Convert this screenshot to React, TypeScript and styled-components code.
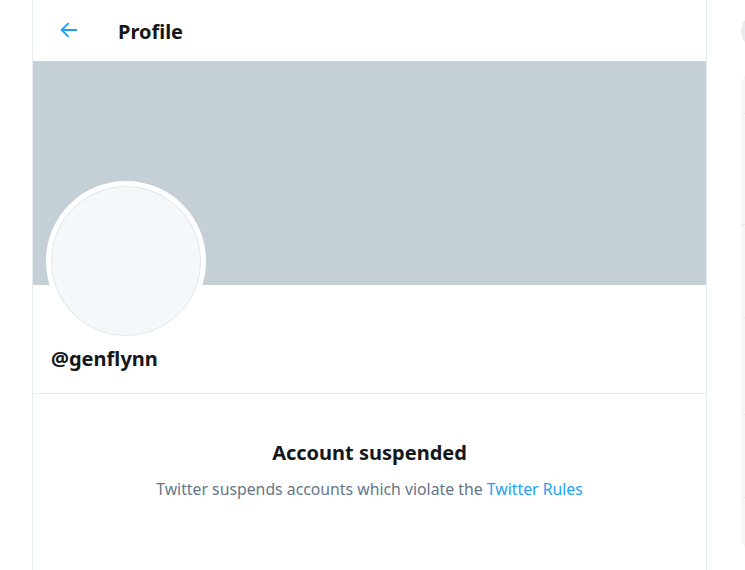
import React from 'react';
import styled, { createGlobalStyle } from 'styled-components';

const GlobalStyle = createGlobalStyle`
  html, body {
    margin: 0;
    padding: 0;
    background: #ffffff;
    font-family: 'Noto Sans', 'Open Sans', 'Liberation Sans', sans-serif;
    color: #14171a;
    overflow: hidden;
  }
`;

const Page = styled.div`
  display: flex;
  align-items: flex-start;
  padding-left: 32px;
  width: 745px;
  height: 570px;
  box-sizing: border-box;
  overflow: hidden;
`;

const MainColumn = styled.main`
  width: 673px;
  height: 570px;
  flex-shrink: 0;
  border-left: 1px solid #e6ecf0;
  border-right: 1px solid #e6ecf0;
  display: flex;
  flex-direction: column;
`;

const Header = styled.header`
  height: 61px;
  display: flex;
  align-items: center;
  padding-left: 24px;
  gap: 37px;
`;

const BackButton = styled.button`
  width: 24px;
  height: 24px;
  padding: 0;
  border: none;
  background: none;
  display: flex;
  align-items: center;
  justify-content: center;
  margin-top: -2px;
`;

const Title = styled.h1`
  margin: 2px 0 0;
  font-size: 20px;
  font-weight: 700;
  line-height: 24px;
`;

const Banner = styled.div`
  height: 224px;
  background: #c4cfd6;
  flex-shrink: 0;
`;

const ProfileInfo = styled.section`
  padding: 0 13px;
  height: 108px;
  border-bottom: 1px solid #e6ecf0;
  display: flex;
  flex-direction: column;
`;

const Avatar = styled.div`
  width: 150px;
  height: 150px;
  margin-top: -104px;
  border-radius: 50%;
  border: 5px solid #ffffff;
  background: #f5f8fa;
  box-shadow: inset 0 0 0 1px #e1e8ed;
`;

const Handle = styled.div`
  margin: 5px 0 0 5px;
  font-size: 20px;
  font-weight: 700;
  line-height: 26px;
`;

const Notice = styled.section`
  display: flex;
  flex-direction: column;
  align-items: center;
  padding-top: 45px;
`;

const NoticeTitle = styled.h2`
  margin: 0;
  font-size: 20px;
  font-weight: 700;
  line-height: 28px;
`;

const NoticeText = styled.p`
  margin: 12px 0 0;
  font-size: 15.8px;
  line-height: 20px;
  color: #657786;
`;

const Link = styled.a`
  color: #1da1f2;
  text-decoration: none;
`;

const Sidebar = styled.aside`
  margin-left: 34px;
  width: 350px;
  flex-shrink: 0;
  display: flex;
  flex-direction: column;
  padding-top: 13px;
  gap: 22px;
`;

const SearchPill = styled.div`
  height: 36px;
  border-radius: 18px;
  background: #e6ecf0;
`;

const Panel = styled.div`
  height: 480px;
  border-radius: 14px;
  background: #f5f8fa;
  display: flex;
  flex-direction: column;
`;

const PanelRow = styled.div<{ $h: number }>`
  height: ${(p) => p.$h}px;
  border-bottom: 1px solid #e6ecf0;
  flex-shrink: 0;
`;

const ArrowIcon = () => (
  <svg width="22" height="22" viewBox="0 0 24 24" fill="none">
    <path
      d="M20 12H4.5M11 5l-7 7 7 7"
      stroke="#1da1f2"
      strokeWidth="2"
      strokeLinecap="round"
      strokeLinejoin="round"
    />
  </svg>
);

export default function App() {
  return (
    <>
      <GlobalStyle />
      <Page>
        <MainColumn>
          <Header>
            <BackButton aria-label="Back">
              <ArrowIcon />
            </BackButton>
            <Title>Profile</Title>
          </Header>
          <Banner />
          <ProfileInfo>
            <Avatar />
            <Handle>@genflynn</Handle>
          </ProfileInfo>
          <Notice>
            <NoticeTitle>Account suspended</NoticeTitle>
            <NoticeText>
              Twitter suspends accounts which violate the{' '}
              <Link href="#">Twitter Rules</Link>
            </NoticeText>
          </Notice>
        </MainColumn>
        <Sidebar>
          <SearchPill />
          <Panel>
            <PanelRow $h={42} />
            <PanelRow $h={110} />
            <PanelRow $h={92} />
            <PanelRow $h={96} />
            <PanelRow $h={82} />
          </Panel>
        </Sidebar>
      </Page>
    </>
  );
}
